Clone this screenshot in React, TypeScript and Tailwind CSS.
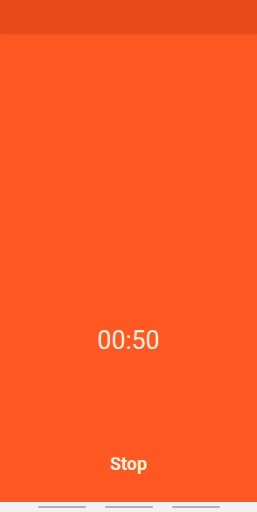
export default function App() {
  return (
    <div
      className="flex h-[512px] w-[257px] flex-col bg-[#ff5722]"
      style={{ fontFamily: "Roboto, 'Liberation Sans', sans-serif" }}
    >
      <div className="h-[33px] shrink-0 bg-[#e64a19] shadow-[0_1px_2px_rgba(0,0,0,0.15)]" />
      <div className="flex flex-1 flex-col items-center">
        <div className="h-[293px]" />
        <div className="text-[25px] leading-[30px] text-[#fff3e0]">00:50</div>
        <div className="flex-1" />
        <button className="mb-[27px] text-[18px] font-bold leading-[22px] text-[#fff3e0]">
          Stop
        </button>
      </div>
      <div className="flex h-[10px] shrink-0 items-center justify-center gap-[19px] bg-[#f2f2f2]">
        <div className="h-[2px] w-[48px] rounded-full bg-[#b0b0b0]" />
        <div className="h-[2px] w-[48px] rounded-full bg-[#b0b0b0]" />
        <div className="h-[2px] w-[48px] rounded-full bg-[#b0b0b0]" />
      </div>
    </div>
  );
}
